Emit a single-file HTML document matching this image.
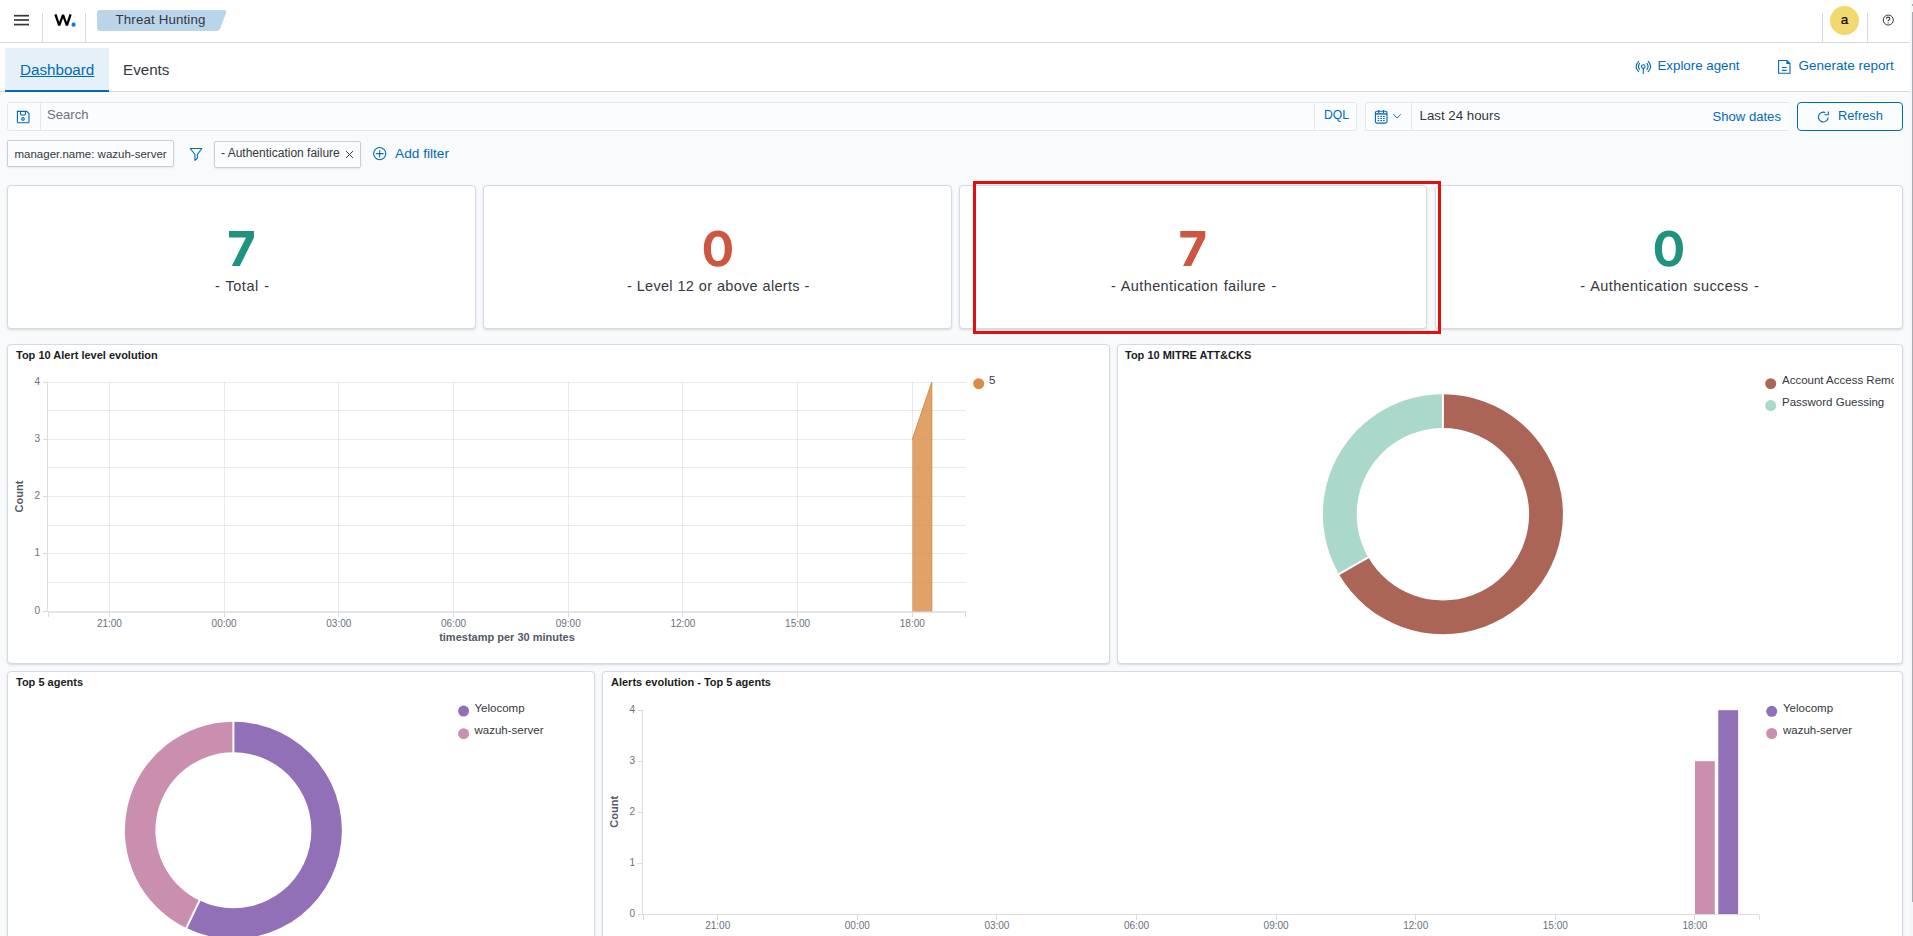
<!DOCTYPE html>
<html><head><meta charset="utf-8"><title>Threat Hunting</title>
<style>
*{box-sizing:border-box;margin:0;padding:0}
html,body{width:1913px;height:936px;overflow:hidden;background:#F9FAFC;font-family:"Liberation Sans",sans-serif;color:#343741}
.a{position:absolute;white-space:nowrap}
.hdr{position:absolute;left:0;top:0;width:1910px;height:43px;background:#fff;border-bottom:1px solid #D3DAE6}
.tabs{position:absolute;left:0;top:43px;width:1910px;height:49px;background:#fff;border-bottom:1px solid #D3DAE6}
.vsep{position:absolute;top:13px;width:1px;height:29px;background:#D3DAE6}
.lnk{color:#006BB8}
.panel{position:absolute;background:#fff;border:1px solid #D3DAE6;border-radius:4px;box-shadow:0 1px 2px rgba(0,0,0,.1),0 2px 4px rgba(0,0,0,.03)}
.ptitle{position:absolute;font-weight:700;font-size:11px;color:#1a1c21;white-space:nowrap}
.stat{position:absolute;background:#fff;border:1px solid #D3DAE6;border-radius:4px;box-shadow:0 1px 2px rgba(0,0,0,.1),0 2px 4px rgba(0,0,0,.03)}
.num{position:absolute;left:0;right:0;text-align:center;font-weight:700;font-size:49px;line-height:49px}
.lbl{position:absolute;left:1.5px;right:0;text-align:center;font-size:14.5px;line-height:16px;color:#343741;letter-spacing:.3px}
.ax{font-size:10px;fill:#69707D;font-family:"Liberation Sans",sans-serif}
.axt{font-size:11px;font-weight:700;fill:#535966;font-family:"Liberation Sans",sans-serif}
.lg{font-size:11.5px;fill:#343741;font-family:"Liberation Sans",sans-serif}
.leg{position:absolute;font-size:11px;color:#343741;white-space:nowrap}
.dot{position:absolute;width:10px;height:10px;border-radius:50%}
</style></head>
<body>
<!-- header -->
<div class="hdr"></div>
<svg class="a" style="left:12px;top:12px" width="20" height="16" viewBox="0 0 20 16"><g stroke="#343741" stroke-width="1.7"><path d="M2 3.7 H17"/><path d="M2 8 H17"/><path d="M2 12.6 H17"/></g></svg>
<div class="vsep" style="left:42px"></div>
<svg class="a" style="left:52px;top:12px" width="26" height="18" viewBox="0 0 26 18"><path d="M3.4 2.4 L7.2 13.4 L11 2.8 L14.9 13.4 L18.6 2.4" fill="none" stroke="#000" stroke-width="2.3" stroke-linejoin="bevel"/><circle cx="21.6" cy="12.7" r="2.1" fill="#0077FF"/></svg>
<div class="vsep" style="left:85px"></div>
<svg class="a" style="left:97px;top:10px" width="130" height="22" viewBox="0 0 130 22"><path d="M3 0 H127 Q130 0 129 3 L123 19 Q122 21 120 21 H3 Q0 21 0 18 V3 Q0 0 3 0Z" fill="#BAD5EA"/></svg>
<div class="a" style="left:115.5px;top:11.7px;font-size:13.3px;letter-spacing:.15px;line-height:16px;color:#343741">Threat Hunting</div>
<div class="vsep" style="left:1822px"></div>
<div class="a" style="left:1830px;top:6px;width:29px;height:29px;border-radius:50%;background:#F1D86F"></div>
<div class="a" style="left:1830px;top:11.5px;width:29px;text-align:center;font-size:13.5px;line-height:16px;color:#000;-webkit-text-stroke:.2px #000">a</div>
<div class="vsep" style="left:1867px"></div>
<svg class="a" style="left:1880px;top:12px" width="16" height="16" viewBox="0 0 16 16"><circle cx="8.3" cy="8.05" r="5" fill="none" stroke="#343741" stroke-width="1"/><path d="M6.4 6.6 Q6.5 5.1 8.1 5.1 Q9.8 5.1 9.8 6.5 Q9.8 7.5 8.9 8 Q8.2 8.4 8.2 9.3" fill="none" stroke="#343741" stroke-width="1.1"/><path d="M8.2 10.3 V12.2" stroke="#9a9ca3" stroke-width="1.1"/></svg>

<!-- tabs -->
<div class="tabs"></div>
<div class="a" style="left:5px;top:48px;width:104px;height:44px;background:#E6F0F8;border-bottom:2px solid #006BB8"></div>
<div class="a lnk" style="left:20px;top:61px;font-size:15.2px;line-height:18px;text-decoration:underline">Dashboard</div>
<div class="a" style="left:123px;top:61px;font-size:15.2px;line-height:18px;color:#343741">Events</div>

<svg class="a" style="left:1633px;top:58px" width="21" height="18" viewBox="0 0 21 18"><g fill="none" stroke="#006BB8" stroke-width="1.1" stroke-linecap="round"><path d="M5.6 3.3 Q0.8 8.6 5.6 13.6"/><path d="M6.6 5.4 Q4.2 8.6 6.6 11.5"/><circle cx="10.3" cy="8.6" r="1.8"/><path d="M10.3 10.4 V15.5"/><path d="M13.9 5.4 Q16.3 8.6 13.9 11.5"/><path d="M15.2 3.3 Q20 8.6 15.2 13.6"/></g></svg>
<div class="a lnk" style="left:1657.5px;top:57.5px;font-size:13.3px;line-height:16px">Explore agent</div>
<svg class="a" style="left:1776px;top:58px" width="17" height="18" viewBox="0 0 17 18"><g fill="none" stroke="#006BB8" stroke-width="1.1"><path d="M2.6 15.3 V2.5 H11 L14 5.5 V15.3 Z"/><path d="M5.9 9.5 H10.7 M5.9 12.4 H10.7"/></g><path d="M10.4 2.5 V6.1 H14 Z" fill="#006BB8"/></svg>
<div class="a lnk" style="left:1798.5px;top:57.5px;font-size:13.5px;line-height:16px">Generate report</div>

<!-- search row -->
<div class="a" style="left:7px;top:102px;width:1350px;height:29px;background:#FBFCFD;border:1px solid #E3E8F0;border-radius:3px"></div>
<div class="a" style="left:40px;top:103px;width:1px;height:27px;background:#E3E8F0"></div>
<div class="a" style="left:1314px;top:103px;width:1px;height:27px;background:#E3E8F0"></div>
<svg class="a" style="left:15px;top:109px" width="16" height="16" viewBox="0 0 16 16"><g fill="none" stroke="#006BB8" stroke-width="1.1"><path d="M2.4 2.4 H11.8 L14 4.8 V12.8 Q14 13.8 13 13.8 H3.4 Q2.4 13.8 2.4 12.8 Z"/><path d="M5.5 2.4 V5 Q5.5 6 6.5 6 H9.4 Q10.4 6 10.4 5 V2.4"/><circle cx="8" cy="9.9" r="1.3"/></g></svg>
<div class="a" style="left:47px;top:107px;font-size:13.1px;line-height:16px;color:#69707D">Search</div>
<div class="a lnk" style="left:1324px;top:108px;font-size:12.2px;line-height:15px">DQL</div>

<div class="a" style="left:1365px;top:102px;width:424px;height:29px;background:#FBFCFD;border:1px solid #E3E8F0;border-right:none;border-radius:3px 0 0 3px"></div>
<div class="a" style="left:1411px;top:103px;width:1px;height:27px;background:#E3E8F0"></div>
<svg class="a" style="left:1373px;top:108px" width="16" height="17" viewBox="0 0 16 17"><g fill="none" stroke="#006BB8" stroke-width="1.1"><rect x="2.4" y="3.3" width="11.6" height="11.8" rx="1.5"/><path d="M5.7 2 V5 M10.5 2 V5"/></g><g fill="#006BB8"><rect x="2.4" y="5.2" width="11.6" height="1.4"/><rect x="4.6" y="7.9" width="1.6" height="1.1"/><rect x="7.4" y="7.9" width="1.6" height="1.1"/><rect x="10.1" y="7.9" width="1.6" height="1.1"/><rect x="4.6" y="9.9" width="1.6" height="1.1"/><rect x="7.4" y="9.9" width="1.6" height="1.1"/><rect x="10.1" y="9.9" width="1.6" height="1.1"/><rect x="4.6" y="12" width="1.6" height="1.1"/><rect x="7.4" y="12" width="1.6" height="1.1"/><rect x="10.1" y="12" width="1.6" height="1.1"/></g></svg>
<svg class="a" style="left:1391px;top:112px" width="11" height="8" viewBox="0 0 11 8"><path d="M2.2 2.2 L6.2 6 L9.8 2.3" fill="none" stroke="#006BB8" stroke-width="1"/></svg>
<div class="a" style="left:1419.5px;top:108px;font-size:13.3px;line-height:16px;color:#343741">Last 24 hours</div>
<div class="a lnk" style="left:1712.5px;top:108.5px;font-size:13.1px;line-height:16px">Show dates</div>
<div class="a" style="left:1797px;top:102px;width:106px;height:29px;border:1px solid #006BB8;border-radius:4px;background:#FBFCFD"></div>
<svg class="a" style="left:1815px;top:108px" width="16" height="16" viewBox="0 0 16 16"><g fill="none" stroke="#006BB8" stroke-width="1.1"><path d="M13.2 9.4 A4.9 4.9 0 1 1 10.4 4.6"/><path d="M13.3 3.4 V6.7 H9.4"/></g></svg>
<div class="a lnk" style="left:1838px;top:107.6px;font-size:12.8px;line-height:16px">Refresh</div>

<!-- filter row -->
<div class="a" style="left:7px;top:140px;width:167px;height:27px;background:#FBFCFD;border:1px solid #C9CFD9;border-radius:2px;box-shadow:0 1px 2px rgba(0,0,0,.08)"></div>
<div class="a" style="left:14.5px;top:146.5px;font-size:11.5px;line-height:14px;color:#343741">manager.name: wazuh-server</div>
<svg class="a" style="left:188px;top:146px" width="16" height="17" viewBox="0 0 16 17"><path d="M2.3 2.5 H13.9 L9.4 8.5 V12.2 L7.1 14.4 Q6.9 14.5 6.9 14.2 V8.5 Z" fill="none" stroke="#006BB8" stroke-width="1.1" stroke-linejoin="round"/></svg>
<div class="a" style="left:214px;top:141px;width:147px;height:27px;background:#FBFCFD;border:1px solid #C9CFD9;border-radius:2px;box-shadow:0 1px 2px rgba(0,0,0,.08)"></div>
<div class="a" style="left:221px;top:146px;font-size:12px;line-height:14px;color:#343741">- Authentication failure</div>
<svg class="a" style="left:344px;top:149px" width="11" height="11" viewBox="0 0 11 11"><path d="M2.1 2.2 L8.9 8.8 M8.9 2.2 L2.1 8.8" stroke="#343741" stroke-width="1"/></svg>
<svg class="a" style="left:371px;top:145px" width="17" height="17" viewBox="0 0 17 17"><circle cx="8.7" cy="8.6" r="6.1" fill="none" stroke="#006BB8" stroke-width="1.1"/><path d="M8.7 5.2 V12.5 M5.2 8.6 H12.6" stroke="#006BB8" stroke-width="1.1"/></svg>
<div class="a lnk" style="left:395px;top:145.8px;font-size:13.7px;line-height:16px">Add filter</div>

<!-- stat cards -->
<div class="stat" style="left:7px;top:185px;width:469px;height:144px">
  <div class="lbl" style="top:92px;word-spacing:1px;letter-spacing:.5px">- Total -</div>
</div>
<div class="stat" style="left:483px;top:185px;width:469px;height:144px">
  <div class="lbl" style="top:92px;word-spacing:.3px">- Level 12 or above alerts -</div>
</div>
<div class="stat" style="left:959px;top:185px;width:468px;height:144px">
  <div class="lbl" style="top:92px;word-spacing:1px;letter-spacing:.4px">- Authentication failure -</div>
</div>
<div class="stat" style="left:1435px;top:185px;width:468px;height:144px">
  <div class="lbl" style="top:92px;word-spacing:1.2px;letter-spacing:.4px">- Authentication success -</div>
</div>
<svg class="a" style="left:0;top:0" width="1913" height="340" viewBox="0 0 1913 340">
  <path d="M229 231 H254 V237.5 L239.8 266 H231.8 L246 237.5 H229 Z" fill="#209280"/>
  <path d="M1180.3 231 H1205.3 V237.5 L1191.1 266 H1183.1 L1197.3 237.5 H1180.3 Z" fill="#CC5642"/>
  <path fill-rule="evenodd" fill="#CC5642" d="M717.9 230.6 C726.5 230.6 732 237.5 732 248.7 C732 259.9 726.5 266.8 717.9 266.8 C709.3 266.8 703.8 259.9 703.8 248.7 C703.8 237.5 709.3 230.6 717.9 230.6 Z M717.9 236.4 C713.4 236.4 711 240.8 711 248.7 C711 256.6 713.4 261 717.9 261 C722.4 261 724.8 256.6 724.8 248.7 C724.8 240.8 722.4 236.4 717.9 236.4 Z"/>
  <path fill-rule="evenodd" fill="#209280" d="M1668.9 230.6 C1677.5 230.6 1683 237.5 1683 248.7 C1683 259.9 1677.5 266.8 1668.9 266.8 C1660.3 266.8 1654.8 259.9 1654.8 248.7 C1654.8 237.5 1660.3 230.6 1668.9 230.6 Z M1668.9 236.4 C1664.4 236.4 1662 240.8 1662 248.7 C1662 256.6 1664.4 261 1668.9 261 C1673.4 261 1675.8 256.6 1675.8 248.7 C1675.8 240.8 1673.4 236.4 1668.9 236.4 Z"/>
</svg>
<div class="a" style="left:973px;top:181px;width:468px;height:153px;border:3px solid #E30E0E"></div>

<!-- chart panels -->
<div class="panel" style="left:7px;top:344px;width:1103px;height:320px"></div>
<div class="ptitle" style="left:16px;top:349px">Top 10 Alert level evolution</div>
<div class="panel" style="left:1117px;top:344px;width:786px;height:320px"></div>
<div class="ptitle" style="left:1125px;top:349px">Top 10 MITRE ATT&amp;CKS</div>
<div class="panel" style="left:7px;top:671px;width:588px;height:300px"></div>
<div class="ptitle" style="left:16px;top:676px">Top 5 agents</div>
<div class="panel" style="left:602px;top:671px;width:1301px;height:300px"></div>
<div class="ptitle" style="left:611px;top:676px">Alerts evolution - Top 5 agents</div>

<!--CHARTS-->
<svg class="a" style="left:0;top:0" width="1913" height="936" viewBox="0 0 1913 936">
<path d="M48 382.5 H966" stroke="rgba(145,150,165,.2)"/>
<path d="M48 410.5 H966" stroke="rgba(145,150,165,.2)"/>
<path d="M48 439.5 H966" stroke="rgba(145,150,165,.2)"/>
<path d="M48 467.5 H966" stroke="rgba(145,150,165,.2)"/>
<path d="M48 496.5 H966" stroke="rgba(145,150,165,.2)"/>
<path d="M48 525.5 H966" stroke="rgba(145,150,165,.2)"/>
<path d="M48 553.5 H966" stroke="rgba(145,150,165,.2)"/>
<path d="M48 582.5 H966" stroke="rgba(145,150,165,.2)"/>
<path d="M109.5 382 V611" stroke="rgba(145,150,165,.2)"/>
<path d="M109.5 612 V617" stroke="#DCDCDC"/>
<path d="M224.5 382 V611" stroke="rgba(145,150,165,.2)"/>
<path d="M224.5 612 V617" stroke="#DCDCDC"/>
<path d="M338.5 382 V611" stroke="rgba(145,150,165,.2)"/>
<path d="M338.5 612 V617" stroke="#DCDCDC"/>
<path d="M453.5 382 V611" stroke="rgba(145,150,165,.2)"/>
<path d="M453.5 612 V617" stroke="#DCDCDC"/>
<path d="M568.5 382 V611" stroke="rgba(145,150,165,.2)"/>
<path d="M568.5 612 V617" stroke="#DCDCDC"/>
<path d="M682.5 382 V611" stroke="rgba(145,150,165,.2)"/>
<path d="M682.5 612 V617" stroke="#DCDCDC"/>
<path d="M797.5 382 V611" stroke="rgba(145,150,165,.2)"/>
<path d="M797.5 612 V617" stroke="#DCDCDC"/>
<path d="M912.5 382 V611" stroke="rgba(145,150,165,.2)"/>
<path d="M912.5 612 V617" stroke="#DCDCDC"/>
<path d="M47.5 382 V612" stroke="#DCDCDC"/>
<path d="M48 612 H966" stroke="#DCDCDC" stroke-width="1.4"/>
<path d="M48.5 612 V617 M965.5 612 V617" stroke="#DCDCDC"/>
<path d="M43 382.5 H48" stroke="#DCDCDC"/>
<text x="40" y="384.6" text-anchor="end" class="ax">4</text>
<path d="M43 439.5 H48" stroke="#DCDCDC"/>
<text x="40" y="441.6" text-anchor="end" class="ax">3</text>
<path d="M43 496.5 H48" stroke="#DCDCDC"/>
<text x="40" y="498.6" text-anchor="end" class="ax">2</text>
<path d="M43 553.5 H48" stroke="#DCDCDC"/>
<text x="40" y="555.6" text-anchor="end" class="ax">1</text>
<path d="M43 611.5 H48" stroke="#DCDCDC"/>
<text x="40" y="613.6" text-anchor="end" class="ax">0</text>
<text x="109.4" y="627" text-anchor="middle" class="ax">21:00</text>
<text x="224.1" y="627" text-anchor="middle" class="ax">00:00</text>
<text x="338.8" y="627" text-anchor="middle" class="ax">03:00</text>
<text x="453.5" y="627" text-anchor="middle" class="ax">06:00</text>
<text x="568.2" y="627" text-anchor="middle" class="ax">09:00</text>
<text x="682.9" y="627" text-anchor="middle" class="ax">12:00</text>
<text x="797.6" y="627" text-anchor="middle" class="ax">15:00</text>
<text x="912.3" y="627" text-anchor="middle" class="ax">18:00</text>
<text x="507" y="641" text-anchor="middle" class="axt">timestamp per 30 minutes</text>
<text transform="translate(23.4 496.5) rotate(-90)" text-anchor="middle" class="axt">Count</text>
<path d="M912.3 611.5 L912.3 439.3 L931.8 382.2 L931.8 611.5Z" fill="#DA8B45" fill-opacity=".8"/>
<path d="M912.3 439.3 L931.8 382.2 L931.8 611.5" fill="none" stroke="#DA8B45" stroke-width="1"/>
<circle cx="978.7" cy="383.7" r="5.5" fill="#DA8B45"/>
<text x="989" y="384" class="lg">5</text>
<path d="M1442.90 394.20 A120 120 0 1 1 1338.98 574.20 L1368.25 557.30 A86.2 86.2 0 1 0 1442.90 428.00Z" fill="#AA6556"/>
<path d="M1338.98 574.20 A120 120 0 0 1 1442.90 394.20 L1442.90 428.00 A86.2 86.2 0 0 0 1368.25 557.30Z" fill="#AAD8CB"/>
<line x1="1442.90" y1="429.00" x2="1442.90" y2="393.20" stroke="#fff" stroke-width="2"/>
<line x1="1369.11" y1="556.80" x2="1338.11" y2="574.70" stroke="#fff" stroke-width="2"/>
<circle cx="1770.7" cy="383.7" r="5.5" fill="#AA6556"/>
<circle cx="1770.7" cy="405.6" r="5.5" fill="#AAD8CB"/>
<svg x="1782" y="370" width="112" height="50"><text x="0" y="14" class="lg">Account Access Removal</text><text x="0" y="36" class="lg">Password Guessing</text></svg>
<path d="M233.40 721.80 A108.5 108.5 0 1 1 186.32 928.06 L199.56 900.58 A78 78 0 1 0 233.40 752.30Z" fill="#9170B8"/>
<path d="M186.32 928.06 A108.5 108.5 0 0 1 233.40 721.80 L233.40 752.30 A78 78 0 0 0 199.56 900.58Z" fill="#CA8EAE"/>
<line x1="233.40" y1="753.30" x2="233.40" y2="720.80" stroke="#fff" stroke-width="2"/>
<line x1="199.99" y1="899.67" x2="185.89" y2="928.96" stroke="#fff" stroke-width="2"/>
<circle cx="463.6" cy="711.1" r="5.5" fill="#9170B8"/>
<circle cx="463.6" cy="733.7" r="5.5" fill="#CA8EAE"/>
<text x="474.5" y="711.5" class="lg">Yelocomp</text>
<text x="474.5" y="734" class="lg">wazuh-server</text>
<path d="M642.5 710 V914" stroke="#DCDCDC"/>
<path d="M643 914.5 H1759.5" stroke="#DCDCDC" stroke-width="1.2"/>
<path d="M638 710.5 H643" stroke="#DCDCDC"/>
<text x="635" y="713.0" text-anchor="end" class="ax">4</text>
<path d="M638 761.5 H643" stroke="#DCDCDC"/>
<text x="635" y="764.0" text-anchor="end" class="ax">3</text>
<path d="M638 812.5 H643" stroke="#DCDCDC"/>
<text x="635" y="815.0" text-anchor="end" class="ax">2</text>
<path d="M638 863.5 H643" stroke="#DCDCDC"/>
<text x="635" y="866.0" text-anchor="end" class="ax">1</text>
<path d="M638 914.5 H643" stroke="#DCDCDC"/>
<text x="635" y="917.0" text-anchor="end" class="ax">0</text>
<path d="M643.5 915 V920" stroke="#DCDCDC"/>
<path d="M717.5 915 V920" stroke="#DCDCDC"/>
<path d="M857.5 915 V920" stroke="#DCDCDC"/>
<path d="M996.5 915 V920" stroke="#DCDCDC"/>
<path d="M1136.5 915 V920" stroke="#DCDCDC"/>
<path d="M1276.5 915 V920" stroke="#DCDCDC"/>
<path d="M1415.5 915 V920" stroke="#DCDCDC"/>
<path d="M1555.5 915 V920" stroke="#DCDCDC"/>
<path d="M1694.5 915 V920" stroke="#DCDCDC"/>
<path d="M1759.5 915 V920" stroke="#DCDCDC"/>
<text x="717.7" y="929" text-anchor="middle" class="ax">21:00</text>
<text x="857.3" y="929" text-anchor="middle" class="ax">00:00</text>
<text x="996.9" y="929" text-anchor="middle" class="ax">03:00</text>
<text x="1136.5" y="929" text-anchor="middle" class="ax">06:00</text>
<text x="1276.1" y="929" text-anchor="middle" class="ax">09:00</text>
<text x="1415.7" y="929" text-anchor="middle" class="ax">12:00</text>
<text x="1555.3" y="929" text-anchor="middle" class="ax">15:00</text>
<text x="1694.9" y="929" text-anchor="middle" class="ax">18:00</text>
<text x="1201.2" y="944.2" text-anchor="middle" class="axt">timestamp per 30 minutes</text>
<text transform="translate(617.8 811.8) rotate(-90)" text-anchor="middle" class="axt">Count</text>
<rect x="1695" y="761.2" width="19.8" height="152.8" fill="#CA8EAE"/>
<rect x="1718.3" y="710.2" width="19.8" height="203.8" fill="#9170B8"/>
<circle cx="1771.7" cy="711.3" r="5.5" fill="#9170B8"/>
<circle cx="1771.7" cy="733.5" r="5.5" fill="#CA8EAE"/>
<text x="1783" y="711.5" class="lg">Yelocomp</text>
<text x="1783" y="734" class="lg">wazuh-server</text>
</svg>
<!--/CHARTS-->
<!-- scrollbar -->
<div class="a" style="left:1910px;top:0;width:3px;height:936px;background:#F5F6F9"></div>
<div class="a" style="left:1912px;top:12px;width:1px;height:890px;background:#A9ABB3"></div>
<div class="a" style="left:1912px;top:4px;width:1px;height:2px;background:#A9ABB3"></div>
</body></html>
